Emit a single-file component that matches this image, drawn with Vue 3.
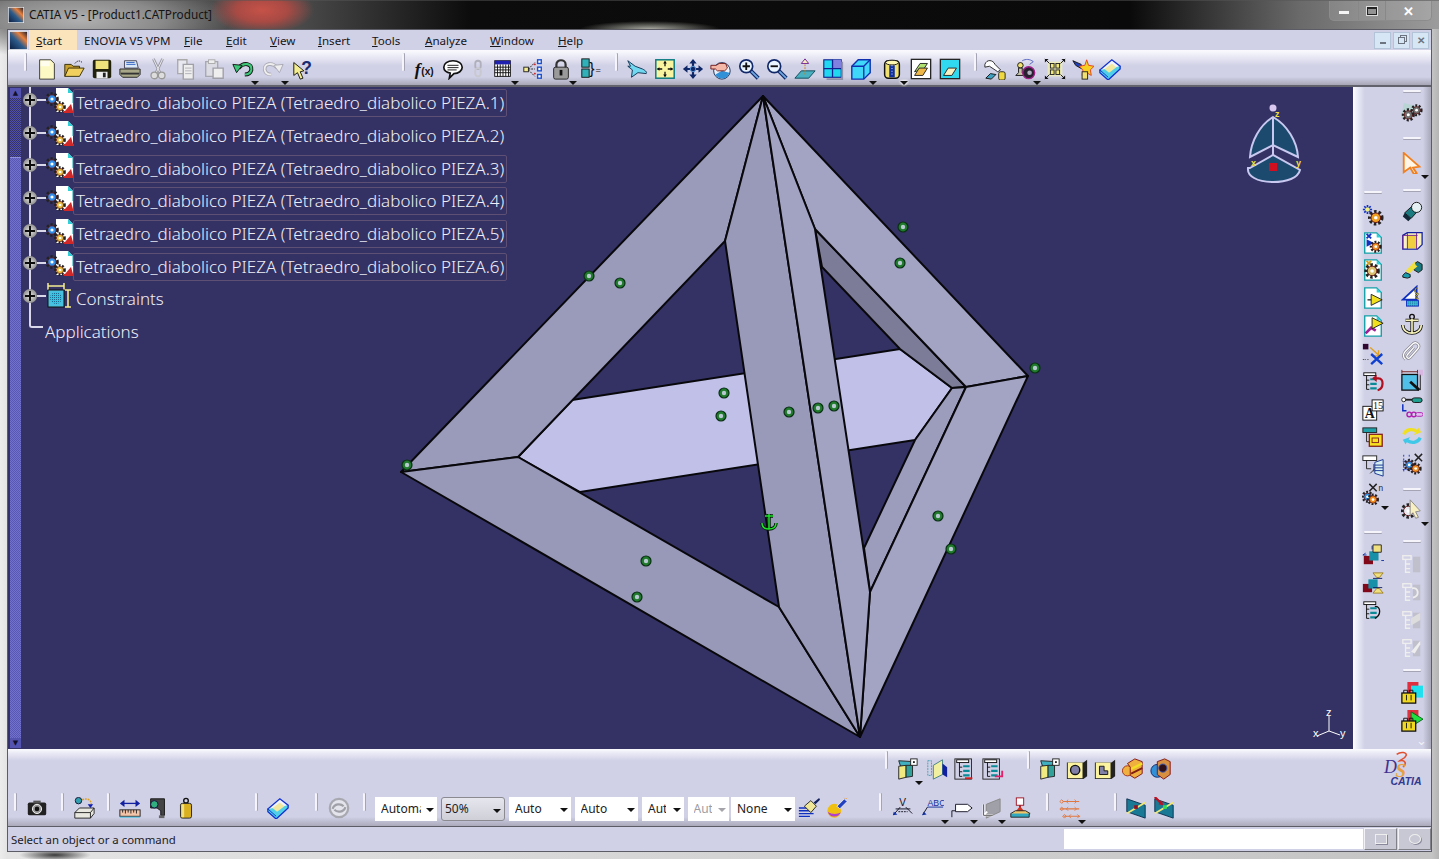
<script setup>
// each bar lists items by centre position; place() turns that into flow margins
function place(items, start, size = 24) {
  let pos = start
  return items.map((it) => {
    const len = it.grip ? 2 : it.w || size
    const gap = it.at - len / 2 - pos
    pos = it.at + len / 2
    return { ...it, len, gap }
  })
}
const ic = (id, at, drop) => ({ id, at, drop })
const grip = (at) => ({ grip: true, at })
const box = (text, at, w, extra) => ({ combo: true, text, at, w, ...extra })

const menus = [
  { u: 'S', rest: 'tart', w: 48, on: true },
  { u: '', rest: 'ENOVIA V5 VPM', w: 100 },
  { u: 'F', rest: 'ile', w: 42 },
  { u: 'E', rest: 'dit', w: 44 },
  { u: 'V', rest: 'iew', w: 48 },
  { u: 'I', rest: 'nsert', w: 54 },
  { u: 'T', rest: 'ools', w: 53 },
  { u: 'A', rest: 'nalyze', w: 65 },
  { u: 'W', rest: 'indow', w: 68 },
  { u: 'H', rest: 'elp', w: 50 },
]

const topBar = place([
  grip(25), ic('new', 47), ic('open', 74), ic('save', 102), ic('print', 130), ic('cut', 158), ic('copy', 186),
  ic('paste', 214), ic('undo', 243, 1), ic('redo', 273, 1), ic('help', 303),
  grip(403), ic('fx', 425), ic('chat', 453), ic('link', 478), ic('table', 503, 1), ic('tree', 533), ic('lock', 561, 1), ic('brace', 591),
  grip(616), ic('fly', 637), ic('fit', 665), ic('pan', 693), ic('rotate', 721), ic('zoomin', 749), ic('zoomout', 777),
  ic('normal', 805), ic('multi', 833), ic('cube', 861, 1), ic('cyl', 892, 1), ic('hide', 921), ic('show', 950),
  grip(975), ic('mouse', 995), ic('chess', 1025, 1), ic('explode', 1055), ic('star', 1083), ic('book', 1110),
], 8)

const rowOne = place([
  grip(886), ic('asm', 907, 1), ic('panel', 937), ic('list', 965), ic('listred', 993),
  grip(1028), ic('asm', 1049), ic('ysq', 1077), ic('ysql', 1105), ic('ocube', 1133), ic('ocube2', 1161),
], 8)

const rowTwo = place([
  grip(15), ic('camera', 37), grip(62), ic('ballbox', 84), grip(108), ic('ruler', 130), ic('clamp', 158), ic('weight', 186),
  grip(256), ic('book', 278), grip(316), ic('swirl', 339), grip(364),
  box('Automatic', 406, 62), box('50%', 473, 64, { gray: true }), box('Auto', 540, 62), box('Auto', 606, 63),
  box('Auto', 663, 42, { narrow: true }), box('Auto', 708, 41, { narrow: true, off: true }), box('None', 763, 64),
  ic('brush', 809), ic('paint', 837),
  grip(880), ic('vtext', 903), ic('abc', 933, 1), ic('pill', 962, 1), ic('gplane', 990, 1), ic('stand', 1020),
  grip(1047), ic('oarrows', 1070, 1), grip(1115), ic('sect', 1136), ic('sect2', 1164),
], 8)

const sideOne = place([
  grip(192), ic('gearstar', 215), ic('docgear', 243), ic('docgear2', 270), ic('docarrow', 298), ic('docarrow2', 326),
  ic('xobj', 354), ic('linesred', 382), ic('a15', 410), ic('treey', 438), ic('treeb', 466), ic('gearx', 494, 1),
  grip(532), ic('cnstr', 555), ic('cnstr2', 583), ic('linesb', 611),
], 87)

const sideTwo = place([
  grip(91), ic('gears', 113), grip(138), ic('cursor', 163, 1), grip(190), ic('tcyl', 212), ic('pcube', 240), ic('blocks', 268),
  ic('tri', 296), ic('anchor', 324), ic('clip', 352), ic('dimsq', 380), ic('screw', 408), ic('loop', 436), ic('xgrid', 464),
  grip(489), ic('gearcur', 510, 1), grip(541), ic('dis1', 564), ic('dis2', 592), ic('dis3', 620), ic('dis4', 648),
  grip(670), ic('fold1', 693), ic('fold2', 721),
], 87)

const parts = [1, 2, 3, 4, 5, 6].map((n) => ({
  label: `Tetraedro_diabolico PIEZA (Tetraedro_diabolico PIEZA.${n})`,
  framed: n !== 2,
}))

const points = [
  [589, 276], [620, 283], [903, 227], [900, 263], [1035, 368], [407, 465], [724, 393], [721, 416],
  [789, 412], [818, 408], [834, 406], [938, 516], [951, 549], [646, 561], [637, 597],
]

const faces = [
  { fill: '#c0c0e9', pts: '518,457 572,400 900,349 952,388 915,440 580,492' },
  { fill: '#7c7c98', pts: '815,229 966,387 952,388 900,349 822,267' },
  { fill: '#9c9cbc', pts: '952,388 966,387 870,592 864,548 915,440' },
  { fill: '#9a9abb', pts: '763,96 401,472 518,457 725,241' },
  { fill: '#9898b8', pts: '401,472 860,737 779,607 518,457' },
  { fill: '#a3a3c4', pts: '763,96 1028,376 966,387 815,229' },
  { fill: '#a3a3c4', pts: '1028,376 860,737 870,592 966,387' },
  { fill: '#9999ba', pts: '763,96 725,241 779,607 860,737' },
  { fill: '#a2a2c3', pts: '763,96 815,229 870,592 860,737' },
]
</script>

<template>
  <div class="window">
    <svg class="defs" width="0" height="0">
      <defs>
        <linearGradient id="catg" x1="0" y1="1" x2="1" y2="0">
          <stop offset="0" stop-color="#0b1a3c" />
          <stop offset=".45" stop-color="#2c5c8c" />
          <stop offset=".7" stop-color="#e8803c" />
          <stop offset="1" stop-color="#10182c" />
        </linearGradient>
        <pattern id="dots" width="2" height="2" patternUnits="userSpaceOnUse">
          <rect width="2" height="2" fill="#38c0e0" />
          <rect width="1" height="1" fill="#1a6a90" />
        </pattern>
      </defs>
    </svg>
    <svg class="sprite">
      <defs>
        <g id="p-gear">
          <circle r="5" fill="none" stroke="#222" stroke-width="3" stroke-dasharray="2 1.6" />
          <circle r="4" stroke="#601010" stroke-width=".8" />
          <circle r="1.5" fill="#fff" />
        </g>
        <g id="p-doc">
          <path d="M3 1h13l5 5v17H3z" fill="#fff" stroke="#14a0a8" stroke-width="1.5" />
          <path d="M16 1v5h5z" fill="#30d0d8" />
        </g>
        <g id="p-list">
          <rect x="3" y="2" width="13" height="3" fill="#fff" stroke="#111" />
          <path d="M6 5v15h3M6 10h3M6 15h3" fill="none" stroke="#111" />
          <path d="M10 9h7M10 14h7M10 19h7" stroke="#0a8a96" stroke-width="2.4" />
        </g>
        <g id="p-dis"><rect x="2" y="3" width="9" height="4" fill="none" stroke="#eee" stroke-width="1.500" /><path d="M5 7v14h5M5 12h5M5 17h5" fill="none" stroke="#eee" stroke-width="1.500" /><path d="M13 4h8v17h-8z" fill="#c0c0cc" /></g>
      </defs>

      <symbol id="cat" viewBox="0 0 24 24"><rect x=".5" y=".5" width="23" height="23" fill="url(#catg)" stroke="#eee" /></symbol>
      <symbol id="new" viewBox="0 0 24 24"><path d="M4 2h12l4 4v17H4z" fill="#fdf9c4" stroke="#333" /><path d="M5 3h10v6H5z" fill="#fff" opacity=".7" /></symbol>
      <symbol id="open" viewBox="0 0 24 24"><path d="M2 20V7h7l2 2h7v3" fill="#c8a030" stroke="#332a00" /><path d="M2 20l4-9h17l-5 9z" fill="#f2d060" stroke="#332a00" /><path d="M13 6c3-4 6-3 8-1" fill="none" stroke="#222" stroke-dasharray="1.5 1" /></symbol>
      <symbol id="save" viewBox="0 0 24 24"><rect x="2" y="2" width="20" height="20" rx="2" fill="#22220c" /><rect x="5" y="3" width="14" height="9" fill="#eee27c" /><rect x="6" y="15" width="12" height="7" fill="#eee" /><rect x="13" y="16" width="3" height="5" fill="#222" /></symbol>
      <symbol id="print" viewBox="0 0 24 24"><path d="M6 3h13l2 8H6z" fill="#d8e8f8" stroke="#445" /><path d="M8 5h9M8 7h10" stroke="#3060c0" /><path d="M1 12h22v6l-3 3H4l-3-3z" fill="#a8a888" stroke="#222" /><path d="M2 17h20" stroke="#333" stroke-width="2" /></symbol>
      <symbol id="cut" viewBox="0 0 24 24"><path d="M7 1l7 15M17 1l-7 15" stroke="#9a9aa8" stroke-width="3" /><path d="M7 1l7 15M17 1l-7 15" stroke="#eee" /><circle cx="8" cy="19" r="3.600" fill="#ddd" stroke="#999" stroke-width="1.400" /><circle cx="16" cy="19" r="3.600" fill="#ddd" stroke="#999" stroke-width="1.400" /></symbol>
      <symbol id="copy" viewBox="0 0 24 24"><path d="M3 2h10v15H3z" fill="#e8e8f0" stroke="#aaa" stroke-width="1.500" /><path d="M9 7h11v16H9z" fill="#eee" stroke="#a0a0a8" stroke-width="1.500" /><path d="M11 11h7M11 14h7M11 17h7" stroke="#b0b0b8" /></symbol>
      <symbol id="paste" viewBox="0 0 24 24"><path d="M3 4h13v16H3z" fill="#dcdce4" stroke="#a8a8b0" stroke-width="1.500" /><rect x="6" y="2" width="7" height="4" fill="#eee" stroke="#aaa" /><path d="M11 11h11v11H11z" fill="#eee" stroke="#a0a0a8" stroke-width="1.500" /></symbol>
      <symbol id="undo" viewBox="0 0 24 24"><path d="M7 11c6-7 15-5 14 2-1 4-4 5-7 5" fill="none" stroke="#111" stroke-width="4.400" /><path d="M7 11c6-7 15-5 14 2-1 4-4 5-7 5" fill="none" stroke="#3cc878" stroke-width="2.400" /><path d="M1 7l10 1-6 8z" fill="#3cc878" stroke="#111" /></symbol>
      <symbol id="redo" viewBox="0 0 24 24"><path d="M17 11c-6-7-15-5-14 2 1 4 4 5 7 5" fill="none" stroke="#a8a8b4" stroke-width="4" /><path d="M17 11c-6-7-15-5-14 2 1 4 4 5 7 5" fill="none" stroke="#eee" stroke-width="2" /><path d="M23 7l-10 1 6 8z" fill="#eee" stroke="#a8a8b4" /></symbol>
      <symbol id="help" viewBox="0 0 24 24"><path d="M2 5l11 9-4 1 3 7-3 1-3-7-4 3z" fill="#f4ec90" stroke="#111" /><text x="10" y="17" font-family="Liberation Sans" font-weight="700" font-size="19" fill="#1a2a70">?</text></symbol>
      <symbol id="fx" viewBox="0 0 24 24"><text x="1" y="18" font-family="Liberation Serif" font-style="italic" font-weight="700" font-size="19" fill="#111">f</text><text x="8" y="18" font-family="Liberation Sans" font-weight="700" font-size="11" fill="#111">(x)</text></symbol>
      <symbol id="chat" viewBox="0 0 24 24"><path d="M12 3c6 0 10 3 10 7s-4 7-9 7l-5 5 1-5.500C5 15.500 2 13 2 10c0-4 4-7 10-7z" fill="#fff" stroke="#111" stroke-width="1.800" /><path d="M6 8h12M6 10.500h12M6 13h10" stroke="#111" /></symbol>
      <symbol id="link" viewBox="0 0 24 24"><rect x="9" y="3" width="6" height="9" rx="3" fill="none" stroke="#b0b0bc" stroke-width="2" /><rect x="9" y="11" width="6" height="9" rx="3" fill="none" stroke="#c8c8d0" stroke-width="2" /></symbol>
      <symbol id="table" viewBox="0 0 24 24"><rect x="3" y="3" width="17" height="17" fill="#fff" stroke="#111" /><rect x="3" y="3" width="17" height="4" fill="#2020b0" /><path d="M6 7v13M9 7v13M12 7v13M15 7v13M18 7v13M3 10h17M3 13h17M3 16h17" stroke="#111" /></symbol>
      <symbol id="tree" viewBox="0 0 24 24"><rect x="2" y="10" width="5" height="5" fill="#f4ec90" stroke="#222" /><path d="M7 12l7-7M7 12h7M7 13l7 7" stroke="#222" stroke-dasharray="2 1" /><g fill="#fff" stroke="#1a50d0" stroke-width="1.500"><rect x="17" y="2" width="4" height="4" /><rect x="17" y="10" width="4" height="4" /><rect x="17" y="18" width="4" height="4" /></g><path d="M13 7h2M14 6v2M13 17h2M14 16v2" stroke="#d02020" /></symbol>
      <symbol id="lock" viewBox="0 0 24 24"><path d="M7 11V7c0-6 10-6 10 0v4" fill="none" stroke="#333" stroke-width="2.400" /><rect x="4" y="10" width="16" height="13" rx="2" fill="#9a9a9a" stroke="#222" /><rect x="10.500" y="13" width="3" height="6" fill="#111" /></symbol>
      <symbol id="brace" viewBox="0 0 24 24"><rect x="2" y="1" width="8" height="9" fill="#30b0b8" stroke="#111" /><rect x="2" y="12" width="8" height="9" fill="#30b0b8" stroke="#111" /><text x="10" y="17" font-family="Liberation Sans" font-size="17" fill="#111">}</text><text x="17" y="16" font-family="Liberation Sans" font-size="10" fill="#111">=</text></symbol>
      <symbol id="fly" viewBox="0 0 24 24"><path d="M2 3l8 6 8 3c4 2 5 4 4 5l-9-1-7 5 1-8-5-4 3 0z" fill="#70d8f0" stroke="#103050" /></symbol>
      <symbol id="fit" viewBox="0 0 24 24"><rect x="2" y="2" width="20" height="20" fill="#f8f4a0" stroke="#0a7a80" stroke-width="1.600" /><path d="M12 4v5M12 15v5M4 12h5M15 12h5" stroke="#111" stroke-width="1.400" /><path d="M12 3l-2 3h4zM12 21l-2-3h4zM3 12l3-2v4zM21 12l-3-2v4z" fill="#111" /></symbol>
      <symbol id="pan" viewBox="0 0 24 24"><path d="M12 4v16M4 12h16" stroke="#102868" stroke-width="2.400" /><path d="M12 1l-4 5h8zM12 23l-4-5h8zM1 12l5-4v8zM23 12l-5-4v8z" fill="#102868" /><circle cx="12" cy="12" r="3" fill="#102868" stroke="#60a0e0" /></symbol>
      <symbol id="rotate" viewBox="0 0 24 24"><circle cx="13" cy="14" r="9" fill="#e8f0fa" stroke="#1a2a50" /><path d="M6 18a8 8 0 0 0 15-2l-8-2z" fill="#3090d8" /><path d="M1 8h6l3-2h7l2 5-3 3H8l-2-2H1z" fill="#f4b8a8" stroke="#701818" /></symbol>
      <symbol id="zoomin" viewBox="0 0 24 24"><path d="M14 14l8 8" stroke="#102868" stroke-width="4.400" /><path d="M14 14l8 8" stroke="#70a8e0" stroke-width="2" /><circle cx="9" cy="9" r="7" fill="#e8f4ff" stroke="#102868" stroke-width="1.800" /><path d="M5 9h8M9 5v8" stroke="#111" stroke-width="2" /></symbol>
      <symbol id="zoomout" viewBox="0 0 24 24"><path d="M14 14l8 8" stroke="#102868" stroke-width="4.400" /><path d="M14 14l8 8" stroke="#70a8e0" stroke-width="2" /><circle cx="9" cy="9" r="7" fill="#e8f4ff" stroke="#102868" stroke-width="1.800" /><path d="M5 9h8" stroke="#111" stroke-width="2" /></symbol>
      <symbol id="normal" viewBox="0 0 24 24"><path d="M1 22l7-8h15l-7 8z" fill="#48b0c0" stroke="#104858" /><path d="M12 18V5" stroke="#d08020" stroke-dasharray="2 1" /><path d="M12 1l-4 5h8z" fill="#f8f0c0" stroke="#702090" /></symbol>
      <symbol id="multi" viewBox="0 0 24 24"><rect x="2" y="2" width="19" height="19" fill="#20d8f0" stroke="#102090" stroke-width="1.200" /><rect x="12" y="2" width="9" height="9" fill="#8080e0" /><path d="M11.500 2v19M2 11.500h19" stroke="#102090" stroke-width="1.400" /><path d="M22 4v19H5" fill="none" stroke="#9090a8" stroke-width="2" /></symbol>
      <symbol id="cube" viewBox="0 0 24 24"><path d="M2 9l7-7h13v14l-7 7H2z" fill="#40d8f8" stroke="#1030b0" stroke-width="1.500" /><path d="M2 9h13v14M15 9l7-7" fill="none" stroke="#1030b0" stroke-width="1.500" /></symbol>
      <symbol id="cyl" viewBox="0 0 24 24"><rect x="4" y="3" width="16" height="19" rx="4" fill="#f0e070" stroke="#111" stroke-width="1.600" /><ellipse cx="12" cy="5" rx="7" ry="2.600" fill="#fff8b0" stroke="#111" /><rect x="9" y="8" width="6" height="13" fill="#1030a0" /><path d="M12 8v12" stroke="#fff" stroke-dasharray="1 2" /></symbol>
      <symbol id="hide" viewBox="0 0 24 24"><rect x="1.500" y="1.500" width="21" height="21" fill="#fff" stroke="#222" stroke-width="1.400" /><path d="M5 15l6-9h8l-4 6z" fill="#b0e070" stroke="#222" /><path d="M5 19l5-8h9l-5 8z" fill="#f0b848" stroke="#222" /></symbol>
      <symbol id="show" viewBox="0 0 24 24"><rect x="1.500" y="1.500" width="21" height="21" fill="#30d8f0" stroke="#222" stroke-width="1.400" /><path d="M5 19l5-8h9l-5 8z" fill="#f8f0c0" stroke="#222" /></symbol>
      <symbol id="mouse" viewBox="0 0 24 24"><path d="M1 7c2-6 9-5 11 0l6 6-3 2-9-6-5 1z" fill="#fff" stroke="#222" /><path d="M2 22l5-5 6 1-5 5z" fill="#40a0c0" stroke="#111" /><rect x="16" y="15" width="7" height="9" rx="2" fill="#f0d840" stroke="#222" /></symbol>
      <symbol id="chess" viewBox="0 0 24 24"><circle cx="7" cy="8" r="3" fill="#f0e070" stroke="#111" /><path d="M5 11h4v5l3 3H2l3-3z" fill="#c8c8a8" stroke="#111" /><path d="M9 3c4-2 8-2 12 1l-4 3" fill="none" stroke="#5060c0" /><circle cx="16" cy="16" r="6.500" fill="#282030" stroke="#a02088" stroke-width="1.500" /><circle cx="17" cy="16" r="2.500" fill="#b0b0c0" /></symbol>
      <symbol id="explode" viewBox="0 0 24 24"><rect x="4" y="4" width="16" height="16" fill="#f8f8a0" opacity=".6" /><g fill="#f0e878" stroke="#222"><rect x="7" y="6" width="4" height="5" /><rect x="13" y="6" width="4" height="5" /><rect x="7" y="13" width="4" height="5" /><rect x="13" y="13" width="4" height="5" /></g><path d="M1 1l5 5M23 1l-5 5M1 23l5-5M23 23l-5-5" stroke="#111" /><path d="M1 1h4L1 5zM23 1h-4l4 4zM1 23h4l-4-4zM23 23h-4l4-4z" fill="#111" /></symbol>
      <symbol id="star" viewBox="0 0 24 24"><path d="M1 3l9 4 1 5-7-4z" fill="#2040c0" stroke="#111" /><path d="M16 2l2 6 6 1-4 4 1 6-5-3-5 3 1-6-4-4 6-1z" fill="#f8d020" stroke="#e04020" /><rect x="11" y="15" width="6" height="8" fill="#f0e070" stroke="#222" /></symbol>
      <symbol id="book" viewBox="0 0 24 24"><path d="M1 13L14 2l9 7-13 12z" fill="#f0f4ff" stroke="#1030d0" stroke-width="1.400" /><path d="M1 13v3l9 8 13-12V9" fill="#50d0e8" stroke="#1030d0" stroke-width="1.400" /><path d="M1 13l9 8" stroke="#1030d0" /><path d="M6 12l8-6 5 4-8 6z" fill="#f0e8a0" /></symbol>
      <symbol id="camera" viewBox="0 0 24 24"><rect x="2" y="6" width="20" height="14" rx="2" fill="#222" /><rect x="8" y="4" width="8" height="3" fill="#555" /><circle cx="12" cy="13" r="5" fill="#999" stroke="#fff" /><circle cx="12" cy="13" r="2.500" fill="#111" /></symbol>
      <symbol id="ballbox" viewBox="0 0 24 24"><circle cx="6" cy="4" r="3.500" fill="#30a0b0" stroke="#113" /><path d="M10 3c6-2 10 0 10 6" fill="none" stroke="#e0a020" stroke-width="1.500" stroke-dasharray="2 1" /><path d="M16 8l6 0-3 4z" fill="#1020b0" /><path d="M2 17l5-5h16v6l-4 5H2z" fill="#e8e8e0" stroke="#222" /><path d="M2 17h17v6M19 17l4-5" fill="none" stroke="#222" /></symbol>
      <symbol id="ruler" viewBox="0 0 24 24"><path d="M3 7h18" stroke="#1020a0" stroke-width="1.400" /><path d="M1 7l5-4v8zM23 7l-5-4v8z" fill="#1020a0" /><rect x="1" y="14" width="22" height="7" fill="#f4c4a8" stroke="#222" /><path d="M4 14v3M7 14v4M10 14v3M13 14v4M16 14v3M19 14v4" stroke="#222" /><path d="M1 22h22" stroke="#40c0e0" /></symbol>
      <symbol id="clamp" viewBox="0 0 24 24"><path d="M4 2h15v18h-4v-5l-4-3H4z" fill="#444" stroke="#111" /><circle cx="8" cy="8" r="4" fill="#30b080" stroke="#114" /><rect x="13" y="20" width="6" height="3" fill="#666" /></symbol>
      <symbol id="weight" viewBox="0 0 24 24"><circle cx="12" cy="4" r="2.500" fill="none" stroke="#111" stroke-width="1.500" /><rect x="6" y="7" width="12" height="16" rx="2" fill="#d8b020" stroke="#222" /><rect x="7" y="8" width="3" height="14" fill="#f0e080" /></symbol>
      <symbol id="swirl" viewBox="0 0 24 24"><circle cx="12" cy="12" r="10" fill="#e4e4ec" stroke="#a8a8b0" stroke-width="2.400" /><path d="M5 13c2-6 9-6 12-3M19 11c-2 6-9 6-12 3" fill="none" stroke="#a0a0a8" stroke-width="2.400" /></symbol>
      <symbol id="brush" viewBox="0 0 24 24"><path d="M1 12h12M1 15h14M1 18h16M1 21h12" stroke="#1030c0" stroke-width="1.400" /><path d="M7 10l7-6 6 6-6 7z" fill="#f0e898" stroke="#222" /><path d="M17 6l6-5 1 2-5 5z" fill="#102060" /></symbol>
      <symbol id="paint" viewBox="0 0 24 24"><circle cx="9" cy="15" r="7.500" fill="#f0c010" /><path d="M2 16a7.500 7.500 0 0 0 14 1c-4 2-10 2-14-1z" fill="#b040d0" /><path d="M12 10l8-8 3 3-8 8z" fill="#2040c0" stroke="#eee" /><path d="M20 1l1 1M23 1l-1 1" stroke="#e8a040" /></symbol>
      <symbol id="vtext" viewBox="0 0 24 24"><text x="8" y="10" font-family="Liberation Sans" font-size="11" fill="#112">V</text><path d="M4 13h16" stroke="#112" /><path d="M7 16h10" stroke="#112" stroke-dasharray="2 1" /><path d="M9 11L2 19M15 11l7 7" stroke="#112" /><path d="M1 20l5-1-4-3z" fill="#1030a0" /></symbol>
      <symbol id="abc" viewBox="0 0 24 24"><text x="6" y="10" font-family="Liberation Sans" font-size="9.500" fill="#1030a0">ABC</text><path d="M6 11h17" stroke="#1030a0" /><path d="M6 11l-5 8" stroke="#112" /><path d="M0 20l5-1-3-3z" fill="#1030a0" /></symbol>
      <symbol id="pill" viewBox="0 0 24 24"><path d="M1 22v-7h4" fill="none" stroke="#112" /><path d="M5 8h13l5 4-5 4H5z" fill="#fff" stroke="#112" /></symbol>
      <symbol id="gplane" viewBox="0 0 24 24"><path d="M8 8l15-6v14L8 23z" fill="#a0a0a8" stroke="#888" /><path d="M5 8v12h10M5 20l4-4" fill="none" stroke="#fff" stroke-width="2" /><path d="M5 8v12h10" fill="none" stroke="#555" /></symbol>
      <symbol id="stand" viewBox="0 0 24 24"><rect x="8" y="1" width="8" height="8" fill="#fff" stroke="#a01020" /><path d="M12 9v5" stroke="#a01020" stroke-width="2" /><path d="M12 10l-5 6h10z" fill="#d03020" /><path d="M2 18l5-3h11l5 3-5 3H6z" fill="#f0c468" stroke="#222" /><path d="M2 18v4h20v-4" fill="#30a8c0" stroke="#222" /></symbol>
      <symbol id="oarrows" viewBox="0 0 24 24"><g stroke="#e07840" fill="none"><path d="M4 5h18M2 13h20M5 21h18" stroke-width="1.200" /><path d="M3 3l2 2-2 2-2-2zM3 11l2 2-2 2-2-2zM6 19l2 2-2 2-2-2z" /><path d="M10 3l-2 2 2 2M17 3l2 2-2 2M10 11l-2 2 2 2M17 11l2 2-2 2M13 19l-2 2 2 2M20 19l2 2-2 2" /></g></symbol>
      <symbol id="sect" viewBox="0 0 24 24"><path d="M2 2l20 7v14L2 16z" fill="#1a7a96" stroke="#0a3050" /><path d="M2 18L22 6" stroke="#f0e878" stroke-width="2" /><rect x="10" y="9" width="4" height="4" fill="#901020" /></symbol>
      <symbol id="sect2" viewBox="0 0 24 24"><path d="M2 2l20 7v14L2 16z" fill="#1a7a96" stroke="#0a3050" /><path d="M2 18L22 6" stroke="#f0e878" stroke-width="2" /><rect x="11" y="9" width="4" height="4" fill="#30e050" /><path d="M2 0l7 7" stroke="#c01020" stroke-width="2.400" /><path d="M11 9l-1-5-4 4z" fill="#c01020" /></symbol>
      <symbol id="asm" viewBox="0 0 24 24"><path d="M3 3l16 1-5 5-9 0z" fill="#40b0c0" stroke="#222" /><path d="M3 9l8-1v13l-8 2z" fill="#f0e880" stroke="#222" /><path d="M11 8h7v12l-7 1z" fill="#30a098" stroke="#222" /><rect x="16" y="1" width="7" height="7" fill="#fff" stroke="#222" /><rect x="18.500" y="3.500" width="2" height="2" fill="#222" /></symbol>
      <symbol id="panel" viewBox="0 0 24 24"><path d="M2 3h4v16H2z" fill="none" stroke="#40a0b0" stroke-dasharray="2 1" /><path d="M8 8l10-6v16L8 23z" fill="#f0f0a0" stroke="#408080" /><path d="M18 6l5 4v11l-5-3z" fill="#1020a0" /></symbol>
      <symbol id="list" viewBox="0 0 24 24"><use href="#p-list" /><rect x="1" y="1" width="18" height="22" fill="none" stroke="#222" /><path d="M12 22h8" stroke="#d02020" stroke-width="2" /></symbol>
      <symbol id="listred" viewBox="0 0 24 24"><use href="#p-list" /><rect x="1" y="1" width="18" height="22" fill="none" stroke="#222" /><path d="M14 20h8v-6" fill="none" stroke="#e02068" stroke-width="2" /></symbol>
      <symbol id="ysq" viewBox="0 0 24 24"><path d="M1 5h18l4-3v18l-4 3H1z" fill="#222" /><rect x="2" y="5" width="16" height="17" fill="#fbf3a0" /><circle cx="10" cy="13" r="5" fill="#8080a8" stroke="#111" stroke-width="1.500" /></symbol>
      <symbol id="ysql" viewBox="0 0 24 24"><path d="M1 5h18l4-3v18l-4 3H1z" fill="#222" /><rect x="2" y="5" width="16" height="17" fill="#fbf3a0" /><path d="M6 9h5v5h4v4H6z" fill="#8080a8" stroke="#111" /></symbol>
      <symbol id="ocube" viewBox="0 0 24 24"><circle cx="6" cy="14" r="5.500" fill="#f0b040" stroke="#a03010" /><path d="M6 6l8-5 8 3v13l-8 5-5-3V10z" fill="#f0b040" stroke="#801010" /><path d="M10 12l12-6" stroke="#f0e020" stroke-width="2.400" /><path d="M10 17l12-6" stroke="#802010" stroke-width="2" /></symbol>
      <symbol id="ocube2" viewBox="0 0 24 24"><circle cx="8" cy="14" r="7" fill="#3090d8" stroke="#102868" /><path d="M8 4l8-3 6 3v14l-7 5-7-5z" fill="#d89040" stroke="#801010" /><circle cx="14" cy="11" r="4.500" fill="#301018" stroke="#4060c0" /></symbol>
      <symbol id="gears" viewBox="0 0 24 24"><path d="M0 18L22 6 3 1z" fill="#a8d8c8" opacity=".6" /><use href="#p-gear" fill="#707070" transform="translate(8 14) scale(1.100)" /><use href="#p-gear" fill="#707070" transform="translate(17 9)" /></symbol>
      <symbol id="cursor" viewBox="0 0 24 24"><path d="M3 1l17 15-7 1 4 6-3 1-4-7-7 5z" fill="#fff6e8" stroke="#f08020" stroke-width="2" /></symbol>
      <symbol id="gearstar" viewBox="0 0 24 24"><path d="M6 1v10M1 6h10M2.500 2.500l7 7M9.500 2.500l-7 7" stroke="#1030c0" stroke-width="1.800" /><circle cx="6" cy="6" r="2.500" fill="#f0f080" /><use href="#p-gear" fill="#f0a020" transform="translate(15 15) scale(1.300)" /></symbol>
      <symbol id="docgear" viewBox="0 0 24 24"><use href="#p-doc" /><path d="M5 2l5 5M10 2l-5 5" stroke="#1030c0" stroke-width="2" /><path d="M5 8l8 4-8 4z" fill="#1030c0" /><use href="#p-gear" fill="#f09020" transform="translate(15 16)" /></symbol>
      <symbol id="docgear2" viewBox="0 0 24 24"><use href="#p-doc" /><path d="M5 2l5 5M10 2l-5 5" stroke="#d0a020" stroke-width="2" /><use href="#p-gear" fill="#d8c070" transform="translate(11 13) scale(1.300)" /></symbol>
      <symbol id="docarrow" viewBox="0 0 24 24"><use href="#p-doc" /><path d="M6 14h6" stroke="#222" stroke-width="1.400" /><path d="M10 8l12 6-12 6z" fill="#f0e020" stroke="#222" /></symbol>
      <symbol id="docarrow2" viewBox="0 0 24 24"><use href="#p-doc" /><path d="M4 20l6-6 5 3" fill="none" stroke="#a02098" stroke-width="3" /><path d="M11 3l12 6-12 6z" fill="#f0e020" stroke="#222" /></symbol>
      <symbol id="xobj" viewBox="0 0 24 24"><rect x="1" y="1" width="6" height="6" fill="#300830" /><path d="M9 5l9 8" stroke="#e0a020" stroke-width="1.500" /><path d="M18 8v6h-6" fill="none" stroke="#e0a020" stroke-width="1.500" /><path d="M10 12l12 11M22 12L10 23" stroke="#1040d0" stroke-width="2.600" /><path d="M1 18h4M6 18h2" stroke="#222" stroke-dasharray="1 1" /></symbol>
      <symbol id="linesred" viewBox="0 0 24 24"><use href="#p-list" transform="translate(-1 0)" /><path d="M13 8l5 0c6 0 6 11-1 13" fill="none" stroke="#b01020" stroke-width="2.400" /><path d="M11 8l5-4v8z" fill="#b01020" /></symbol>
      <symbol id="linesb" viewBox="0 0 24 24"><use href="#p-list" transform="translate(-1 0)" /><path d="M14 7c7 0 7 10 0 13" fill="none" stroke="#111" stroke-width="1.400" /></symbol>
      <symbol id="a15" viewBox="0 0 24 24"><rect x="1" y="8" width="15" height="15" fill="#fff" stroke="#111" /><text x="3" y="21" font-family="Liberation Serif" font-weight="700" font-size="15" fill="#111">A</text><rect x="11" y="1" width="12" height="12" fill="#fff" stroke="#111" /><text x="12" y="11" font-family="Liberation Serif" font-size="11" fill="#111">15</text></symbol>
      <symbol id="treey" viewBox="0 0 24 24"><rect x="1" y="1" width="15" height="5" fill="#20a0a8" stroke="#222" /><path d="M5 6v10h4" fill="none" stroke="#222" /><rect x="8" y="8" width="14" height="13" fill="#f8e020" stroke="#802020" stroke-width="1.400" /><rect x="11" y="12" width="7" height="5" fill="none" stroke="#802020" /></symbol>
      <symbol id="treeb" viewBox="0 0 24 24"><rect x="1" y="1" width="15" height="5" fill="#fff" stroke="#222" /><path d="M5 6v9h5M13 10v8M9 20l5-5" fill="none" stroke="#222" /><path d="M14 8l9-3v18l-9-3z" fill="#d8f0f0" stroke="#103090" /><path d="M14 11h9M14 14h9M14 17h9" stroke="#103090" /></symbol>
      <symbol id="gearx" viewBox="0 0 24 24"><path d="M8 1l8 8M16 1L8 9" stroke="#222" stroke-width="1.600" /><text x="18" y="9" font-family="Liberation Sans" font-size="9" fill="#222">n</text><use href="#p-gear" fill="#3090e0" transform="translate(6 15)" /><use href="#p-gear" fill="#f09020" transform="translate(12 18)" /></symbol>
      <symbol id="cnstr" viewBox="0 0 24 24"><path d="M1 12h4M1 12l3-2M11 2v4M21 18h3" stroke="#1030a0" /><rect x="2" y="13" width="10" height="9" fill="#800818" /><rect x="8" y="8" width="10" height="10" fill="#1890a8" /><path d="M12 1h9v8h-9z" fill="#f0e080" stroke="#222" /></symbol>
      <symbol id="cnstr2" viewBox="0 0 24 24"><rect x="1" y="13" width="10" height="9" fill="#800818" /><rect x="7" y="8" width="10" height="10" fill="#1890a8" /><path d="M12 1h11l-4 5h-3zM12 23h11l-4-5h-3z" fill="#f0e080" stroke="#a08020" /><path d="M12 7h10M12 17h10" stroke="#102060" /></symbol>
      <symbol id="tcyl" viewBox="0 0 24 24"><path d="M4 13l11-10 6 5-10 11z" fill="#1a7a80" stroke="#111" /><circle cx="17" cy="7" r="5.500" fill="#e4f0f4" stroke="#111" /><path d="M4 13l7 6-3 3-6-5z" fill="#102838" /></symbol>
      <symbol id="pcube" viewBox="0 0 24 24"><path d="M2 7l5-3h16v13l-5 5H2z" fill="#f8f0c0" stroke="#1020a0" stroke-width="1.400" /><rect x="7" y="7" width="10" height="14" fill="#f0d040" /><path d="M2 7v15M7 4v18M17 4v18M2 7h16" stroke="#702090" /></symbol>
      <symbol id="blocks" viewBox="0 0 24 24"><path d="M14 8l4-3 5 3v6l-4 3-5-3z" fill="#1a7a80" stroke="#111" /><path d="M2 20l3-3 5 2v3l-3 1-5-1z" fill="#1a9aa8" stroke="#111" /><path d="M5 15L15 5l1 4 2 1-9 8z" fill="#f0e040" /></symbol>
      <symbol id="tri" viewBox="0 0 24 24"><path d="M2 16L17 2v14z" fill="#fff" stroke="#1030c0" stroke-width="2" /><path d="M17 3c-3 3-2 6 2 7-4 1-4 5 0 5" fill="none" stroke="#111" stroke-width="1.600" /><path d="M17 3c-3 3-2 6 2 7-4 1-4 5 0 5" fill="none" stroke="#f0e060" /><rect x="6" y="17" width="13" height="6" fill="url(#dots)" stroke="#1030c0" /></symbol>
      <symbol id="anchor" viewBox="0 0 24 24"><circle cx="12" cy="4" r="2.500" fill="none" stroke="#111" stroke-width="1.500" /><path d="M5 8h14M12 6v16M2 13c0 6 5 9 10 9s10-3 10-9" fill="none" stroke="#111" stroke-width="3.600" /><path d="M5 8h14M12 6v16M2 13c0 6 5 9 10 9s10-3 10-9" fill="none" stroke="#f4f0b8" stroke-width="1.800" /></symbol>
      <symbol id="clip" viewBox="0 0 24 24"><path d="M5 20c-4-3-2-7 0-9l8-8c4-3 9 2 5 6l-8 9c-2 2-5 0-3-3l7-8" fill="none" stroke="#8a8a94" stroke-width="3" /><path d="M5 20c-4-3-2-7 0-9l8-8c4-3 9 2 5 6l-8 9c-2 2-5 0-3-3l7-8" fill="none" stroke="#fff" stroke-width="1.400" /></symbol>
      <symbol id="dimsq" viewBox="0 0 24 24"><rect x="1" y="6" width="17" height="17" fill="#50c0e8" stroke="#111" stroke-width="1.400" /><path d="M1 1v4M18 1v4M1 3h17" stroke="#702020" /><path d="M21 6v17" stroke="#111" /><path d="M19 1h5v6h-5z" fill="#e0a0e0" opacity=".5" /><path d="M10 14l10 9" stroke="#111" stroke-width="3" /></symbol>
      <symbol id="screw" viewBox="0 0 24 24"><circle cx="3" cy="3" r="2.200" fill="#fff" stroke="#222" /><path d="M5 3h7" stroke="#222" stroke-width="2" /><rect x="12" y="1" width="11" height="5" rx="2.500" fill="#20a090" stroke="#111" /><path d="M2 8v7h4" fill="none" stroke="#1030c0" stroke-width="1.600" /><circle cx="9" cy="19" r="2.500" fill="none" stroke="#b020b0" stroke-width="1.500" /><circle cx="14" cy="19" r="2.500" fill="none" stroke="#b020b0" stroke-width="1.500" /><rect x="16" y="17" width="8" height="4" rx="2" fill="#e0c0f0" stroke="#b020b0" /></symbol>
      <symbol id="loop" viewBox="0 0 24 24"><path d="M3 10c3-6 10-6 14-3" fill="none" stroke="#f0e020" stroke-width="3.600" /><path d="M21 14c-3 6-10 6-14 3" fill="none" stroke="#40c8e8" stroke-width="3.600" /><path d="M14 11l8-3-3-5z" fill="#f0e020" /><path d="M10 13l-8 3 3 5z" fill="#40c8e8" /></symbol>
      <symbol id="xgrid" viewBox="0 0 24 24"><path d="M3 2v20M9 2v20M2 9h10M2 18h10" stroke="#1030c0" stroke-dasharray="2 2" /><path d="M15 1l8 8M23 1l-8 8" stroke="#222" stroke-width="1.600" /><use href="#p-gear" fill="#3090e0" transform="translate(9 13)" /><use href="#p-gear" fill="#f09020" transform="translate(16 17)" /></symbol>
      <symbol id="gearcur" viewBox="0 0 24 24"><use href="#p-gear" fill="#e8e8f0" transform="translate(8 13) scale(1.300)" /><path d="M10 1l11 12-5 1 3 6-3 1-3-6-3 3z" fill="#f8f0c0" stroke="#888" /></symbol>
      <symbol id="dis1" viewBox="0 0 24 24"><use href="#p-dis" /></symbol>
      <symbol id="dis2" viewBox="0 0 24 24"><use href="#p-dis" /><path d="M12 8c7-2 9 8 1 10" fill="none" stroke="#eee" stroke-width="2" /></symbol>
      <symbol id="dis3" viewBox="0 0 24 24"><use href="#p-dis" /><path d="M11 10l10-6v8l-10 6z" fill="#ddd" /></symbol>
      <symbol id="dis4" viewBox="0 0 24 24"><use href="#p-dis" /><path d="M11 16l10-12v4l-6 10z" fill="#eee" /></symbol>
      <symbol id="fold1" viewBox="0 0 24 24"><path d="M7 0h12v12H7z" fill="#e03040" /><path d="M11 4h13v13H11z" fill="#20e0f0" /><rect x="1" y="12" width="15" height="11" fill="#f0d820" stroke="#111" stroke-width="1.400" /><path d="M3 12V9h4v3M9 12V9h4v3M6 14v6M11 14v6" fill="none" stroke="#111" /></symbol>
      <symbol id="fold2" viewBox="0 0 24 24"><path d="M7 0h12v12H7z" fill="#e03040" /><path d="M11 2l13 8-13 8z" fill="#20e040" stroke="#106020" /><rect x="1" y="12" width="15" height="11" fill="#f0d820" stroke="#111" stroke-width="1.400" /><path d="M3 12V9h4v3M9 12V9h4v3M6 14v6M11 14v6" fill="none" stroke="#111" /></symbol>
      <symbol id="part" viewBox="0 0 28 30">
        <path d="M10 3h12l5 5v19H10z" fill="#fff" /><path d="M22 3v5h5z" fill="#30d0d8" /><path d="M27 8v10" stroke="#14a0a8" />
        <use href="#p-gear" fill="#2f8ce8" transform="translate(6 14) scale(1.050)" />
        <use href="#p-gear" fill="#e8c040" transform="translate(14 22) scale(.9)" />
        <path d="M19 26l6-7 2 7z" fill="#d02828" /><path d="M18 27h10" stroke="#d02828" stroke-width="2" />
      </symbol>
      <symbol id="cons" viewBox="0 0 28 30">
        <path d="M2 2v7M18 2v7M2 5h16" stroke="#f4ec90" stroke-width="1.500" />
        <rect x="2" y="9" width="16" height="17" fill="#48c0e0" stroke="#111" />
        <circle cx="10" cy="17" r="6" fill="url(#dots)" />
        <path d="M19 9h6M22 9v17M19 26h6" stroke="#f4ec90" stroke-width="1.600" />
      </symbol>
    </svg>

    <div class="title-bar">
      <svg class="title-logo"><use href="#cat" /></svg>
      <span class="title-text">CATIA V5 - [Product1.CATProduct]</span>
      <div class="win-btns">
        <span class="win-btn min"><i></i></span>
        <span class="win-btn max"><i></i></span>
        <span class="win-btn close">✕</span>
      </div>
    </div>

    <div class="frame">
      <div class="menu-bar">
        <svg class="menu-logo"><use href="#cat" /></svg>
        <span
          v-for="m in menus"
          :key="m.rest"
          class="menu-item"
          :class="{ on: m.on }"
          :style="{ width: m.w + 'px' }"
        ><u>{{ m.u }}</u>{{ m.rest }}</span>
        <div class="mdi-btns">
          <span class="mdi"><b class="mdi-min"></b></span>
          <span class="mdi"><b class="mdi-res"></b></span>
          <span class="mdi mdi-x">✕</span>
        </div>
      </div>

      <div class="tool-bar">
        <template v-for="(it, i) in topBar" :key="i">
          <span v-if="it.grip" class="grip" :style="{ marginLeft: it.gap + 'px' }"></span>
          <span v-else class="tool" :style="{ marginLeft: it.gap + 'px' }">
            <svg><use :href="'#' + it.id" /></svg>
            <i v-if="it.drop" class="drop" :class="{ lit: it.id === 'cyl' }"></i>
          </span>
        </template>
      </div>

      <div class="main-row">
        <div class="viewport">
          <svg class="model" viewBox="8 87 1345 662">
            <polygon v-for="f in faces" :key="f.pts" :points="f.pts" :fill="f.fill" stroke="#08080c" stroke-width="2" stroke-linejoin="round" />
            <g v-for="p in points" :key="p.join()">
              <circle :cx="p[0]" :cy="p[1]" r="5" fill="#1f7a2c" stroke="#0a3014" stroke-width="1.200" />
              <circle :cx="p[0]" :cy="p[1]" r="2.200" fill="#b8c8d0" />
            </g>
            <g transform="translate(769 522)" fill="none" stroke="#061a08" stroke-width="3.400">
              <path d="M-4-6H4M0-8V7M-7 1c0 4 3 6 7 6s7-2 7-6" />
            </g>
            <g transform="translate(769 522)" fill="none" stroke="#1ee02c" stroke-width="1.500">
              <path d="M-4-6H4M0-8V7M-7 1c0 4 3 6 7 6s7-2 7-6" />
            </g>
            <!-- compass -->
            <g fill="none" stroke="#c8c8f0" stroke-width="2">
              <path d="M1273 117c14 8 24 24 25 40l-25-12-23 12c1-16 10-32 23-40z" fill="#1c4a6e" />
              <path d="M1250 168l23-13 27 15c-2 8-13 12-27 12-16 0-26-6-25-14z" fill="#1c4a6e" />
              <path d="M1273 117v38" />
            </g>
            <circle cx="1273" cy="108" r="3.500" fill="#d8c8f0" />
            <rect x="1269" y="163" width="8" height="8" fill="#d01020" />
            <text x="1275" y="117" class="cmp">z</text>
            <text x="1251" y="166" class="cmp">x</text>
            <text x="1296" y="166" class="cmp">y</text>
            <!-- axes -->
            <path d="M1329 716v15l-12 5M1329 731l11 4" fill="none" stroke="#fff" />
            <text x="1326" y="716" class="axis">z</text>
            <text x="1313" y="737" class="axis">x</text>
            <text x="1340" y="737" class="axis">y</text>
          </svg>

          <div class="scroll-bar">
            <span class="scroll-end">▲</span>
            <span class="scroll-thumb"></span>
            <span class="scroll-track"></span>
            <span class="scroll-end">▼</span>
          </div>

          <div class="tree">
            <span class="elbow"></span>
            <div v-for="p in parts" :key="p.label" class="tree-row">
              <span class="node"></span>
              <span class="stub"></span>
              <svg class="tree-icon"><use href="#part" /></svg>
              <span class="tree-label" :class="{ framed: p.framed }">{{ p.label }}</span>
            </div>
            <div class="tree-row">
              <span class="node"></span>
              <span class="stub"></span>
              <svg class="tree-icon"><use href="#cons" /></svg>
              <span class="tree-label">Constraints</span>
            </div>
            <div class="tree-row apps"><span class="tree-label">Applications</span></div>
          </div>
        </div>

        <div class="side-bar">
          <div v-for="(col, c) in [sideOne, sideTwo]" :key="c" class="side-col">
            <template v-for="(it, i) in col" :key="i">
              <span v-if="it.grip" class="grip flat" :style="{ marginTop: it.gap + 'px' }"></span>
              <span v-else class="tool" :style="{ marginTop: it.gap + 'px' }">
                <svg><use :href="'#' + it.id" /></svg>
                <i v-if="it.drop" class="drop"></i>
              </span>
            </template>
          </div>
          <span class="more">⌄</span>
        </div>
      </div>

      <div class="bottom-bars">
        <div class="row row-one">
          <template v-for="(it, i) in rowOne" :key="i">
            <span v-if="it.grip" class="grip" :style="{ marginLeft: it.gap + 'px' }"></span>
            <span v-else class="tool" :style="{ marginLeft: it.gap + 'px' }">
              <svg><use :href="'#' + it.id" /></svg>
              <i v-if="it.drop" class="drop"></i>
            </span>
          </template>
          <svg class="logo" viewBox="0 0 42 34">
            <path d="M14 3c4-3 10-2 9 1-1 3-5 4-6 5 5-1 7 3 3 6" fill="none" stroke="#e05030" stroke-width="1.500" />
            <text x="2" y="21" font-family="Liberation Serif" font-style="italic" font-size="17" fill="#403090">D</text>
            <text x="13" y="25" font-family="Liberation Serif" font-style="italic" font-weight="700" font-size="18" fill="#e8a040">S</text>
            <text x="8" y="32" font-family="Liberation Sans" font-style="italic" font-weight="700" font-size="10" fill="#303890">CATIA</text>
          </svg>
        </div>
        <div class="row row-two">
          <template v-for="(it, i) in rowTwo" :key="i">
            <span v-if="it.grip" class="grip" :style="{ marginLeft: it.gap + 'px' }"></span>
            <span
              v-else-if="it.combo"
              class="combo"
              :class="{ gray: it.gray, narrow: it.narrow, off: it.off }"
              :style="{ marginLeft: it.gap + 'px', width: it.len + 'px' }"
            >
              <span class="combo-text">{{ it.text }}</span>
              <i class="combo-arrow"></i>
            </span>
            <span v-else class="tool" :style="{ marginLeft: it.gap + 'px' }">
              <svg><use :href="'#' + it.id" /></svg>
              <i v-if="it.drop" class="drop"></i>
            </span>
          </template>
        </div>
      </div>

      <div class="status-bar">
        <span class="status-text">Select an object or a command</span>
        <span class="status-input"></span>
        <span class="status-btn"><b class="sb-a"></b></span>
        <span class="status-btn"><b class="sb-b"></b></span>
      </div>
    </div>
  </div>
</template>

<style scoped>
.window {
  width: 1439px;
  height: 859px;
  overflow: hidden;
  display: flex;
  flex-direction: column;
  font-family: "Noto Sans", sans-serif;
  background:
    radial-gradient(ellipse 36px 6px at 55px 855px, #3a3a3a, transparent),
    linear-gradient(#555 0, transparent 1px),
    radial-gradient(ellipse 52px 24px at 262px 10px, #c65248 0, #a84a44 50%, transparent 100%),
    radial-gradient(ellipse 70px 8px at 650px 29px, #a8a8a0, transparent),
    radial-gradient(ellipse 150px 40px at 80px 20px, #b0b0b0 0, #8a8a8a 55%, transparent 100%),
    linear-gradient(90deg, #555 0, #4a4a4a 300px, #0c0c0c 470px, #0a0a0a 1130px, #6a6a6a 1300px, #9c9c9c 1439px) 0 0 / 100% 29px no-repeat,
    linear-gradient(90deg, #ececec 0, #e4e4e4 7px, #c4c4c4 1432px, #b4b4b4 1439px);
}
.defs {
  position: absolute;
}
.sprite {
  display: none;
}
.title-bar {
  height: 29px;
  flex: none;
  display: flex;
  align-items: flex-start;
  box-sizing: border-box;
  padding-left: 8px;
}
.title-logo {
  width: 16px;
  height: 16px;
  margin-top: 7px;
}
.title-text {
  margin-left: 5px;
  margin-top: 6px;
  font-size: 11.75px;
  line-height: 17px;
  color: #141414;
}
.win-btns {
  margin-left: auto;
  margin-right: 7px;
  width: 103px;
  height: 20px;
  margin-top: 1px;
  display: flex;
  box-sizing: border-box;
  border: 1px solid #8c8c8c;
  border-top: none;
  border-radius: 0 0 5px 5px;
  background: rgba(255, 255, 255, .12);
}
.win-btn {
  display: flex;
  align-items: center;
  justify-content: center;
  color: #fff;
  border-right: 1px solid #888;
  box-sizing: border-box;
}
.win-btn.min { width: 29px; }
.win-btn.max { width: 27px; }
.win-btn.close {
  flex: 1;
  border-right: none;
  font-size: 13px;
  font-weight: 700;
}
.win-btn.min i {
  width: 10px;
  height: 3px;
  background: #f4f4f4;
  margin-top: 4px;
}
.win-btn.max i {
  width: 10px;
  height: 8px;
  box-sizing: border-box;
  border: 1px solid #222;
  border-top-width: 2px;
  outline: 1px solid #ddd;
}
.frame {
  flex: none;
  margin-left: 7px;
  width: 1425px;
  height: 823px;
  box-sizing: border-box;
  border: 1px solid #5c5c66;
  background: #d0d0e6;
  display: flex;
  flex-direction: column;
}
.menu-bar {
  height: 20px;
  flex: none;
  display: flex;
  align-items: center;
  font-size: 11.6px;
  color: #16161c;
}
.menu-logo {
  width: 21px;
  height: 19px;
}
.menu-item {
  height: 20px;
  line-height: 21px;
  padding-left: 7px;
  box-sizing: border-box;
  flex: none;
}
.menu-item.on {
  background: #fbe3bb;
}
.mdi-btns {
  margin-left: auto;
  margin-right: 2px;
  display: flex;
  gap: 2px;
}
.mdi {
  width: 17px;
  height: 17px;
  box-sizing: border-box;
  border: 1px solid #b4c4d8;
  background: #d6e6f4;
  display: flex;
  align-items: center;
  justify-content: center;
  color: #6c7480;
  font-size: 10px;
  font-weight: 700;
}
.mdi-min {
  width: 6px;
  height: 2px;
  background: #6c7480;
  margin-top: 6px;
}
.mdi-res {
  width: 7px;
  height: 7px;
  box-sizing: border-box;
  border: 1px solid #6c7480;
  box-shadow: 2px -2px 0 -1px #d6e6f4, 2px -2px 0 0 #6c7480;
}
.tool-bar {
  height: 37px;
  flex: none;
  display: flex;
  align-items: center;
  box-sizing: border-box;
  padding-top: 3px;
  border-bottom: 2px solid #62626c;
  background: linear-gradient(#fbfbfe 0, #eeeef8 5px, #d0d0e6 16px, #d0d0e6 27px, #a6a6b6 35px);
}
.tool {
  position: relative;
  flex: none;
  width: 24px;
  height: 24px;
  display: block;
}
.tool svg {
  width: 24px;
  height: 24px;
  display: block;
  overflow: visible;
  transform: scale(.92);
}
.drop {
  position: absolute;
  right: -4px;
  bottom: -4px;
  width: 0;
  height: 0;
  border-left: 4px solid transparent;
  border-right: 4px solid transparent;
  border-top: 4px solid #111;
}
.drop.lit {
  filter: drop-shadow(0 0 1px #fff) drop-shadow(0 0 1px #fff);
}
.grip {
  flex: none;
  width: 2px;
  height: 18px;
  background: #f4f4fa;
  box-shadow: 1px 0 0 #a4a4b4;
  border-radius: 1px;
  align-self: flex-start;
  margin-top: 0;
  display: block;
}
.grip.flat {
  width: 18px;
  height: 2px;
  align-self: center;
  box-shadow: 0 1px 0 #a4a4b4;
}
.main-row {
  flex: none;
  height: 662px;
  display: flex;
}
.viewport {
  position: relative;
  width: 1345px;
  height: 662px;
  background: #343264;
  overflow: hidden;
  flex: none;
}
.model {
  position: absolute;
  left: 0;
  top: 0;
  width: 1345px;
  height: 662px;
}
.cmp {
  font: 700 9px "Liberation Sans", sans-serif;
  fill: #f0e040;
}
.axis {
  font: 11px "Liberation Sans", sans-serif;
  fill: #fff;
}
.scroll-bar {
  position: absolute;
  left: 2px;
  top: 1px;
  bottom: 1px;
  width: 11px;
  display: flex;
  flex-direction: column;
}
.scroll-end {
  height: 10px;
  background: #5454b0;
  color: #10102c;
  font-size: 7px;
  line-height: 10px;
  text-align: center;
  flex: none;
  font-family: "DejaVu Sans", sans-serif;
}
.scroll-thumb {
  height: 59px;
  flex: none;
  background: repeating-conic-gradient(#5252ac 0 25%, #343264 0 50%) 0 0 / 2px 2px;
}
.scroll-track {
  flex: 1;
  border-top: 1px solid #9090e0;
  background: repeating-conic-gradient(#7272cc 0 25%, #5858b4 0 50%) 0 0 / 2px 2px;
}
.tree {
  position: absolute;
  left: 0;
  top: 0;
  color: #eeeef8;
  display: flex;
  flex-direction: column;
}
.elbow {
  position: absolute;
  left: 21px;
  top: 0;
  width: 14px;
  height: 241px;
  box-sizing: border-box;
  border-left: 2px solid #d8d8ea;
  border-bottom: 2px solid #d8d8ea;
  border-bottom-left-radius: 3px;
}
.tree-row {
  position: relative;
  height: 32.7px;
  display: flex;
  align-items: center;
  padding-left: 15px;
}
.node {
  position: relative;
  width: 14px;
  height: 14px;
  margin-top: -7px;
  border-radius: 50%;
  flex: none;
  background: radial-gradient(circle at 50% 50%, #e8e8e8, #6c6c6c);
}
.node::before,
.node::after {
  content: "";
  position: absolute;
  background: #0c0c0c;
}
.node::before {
  left: 2px;
  right: 2px;
  top: 6px;
  height: 2px;
}
.node::after {
  top: 2px;
  bottom: 2px;
  left: 6px;
  width: 2px;
}
.stub {
  width: 9px;
  height: 2px;
  background: #d8d8ea;
  flex: none;
  margin-top: -7px;
}
.tree-icon {
  width: 28px;
  height: 30px;
  flex: none;
  margin-top: -7px;
}
.tree-label {
  position: relative;
  margin-left: -1px;
  padding: 0 2px;
  height: 26px;
  line-height: 26px;
  font-size: 17px;
  font-weight: 300;
  white-space: nowrap;
  border: 1px solid transparent;
  border-radius: 2px;
}
.tree-label.framed {
  border-color: #5e4f74;
}
.tree-row.apps {
  padding-left: 35px;
}
.side-bar {
  position: relative;
  width: 78px;
  flex: none;
  display: flex;
  background: linear-gradient(90deg, #ffffff 0, #ecedf8 4px, #d0d0e6 12px, #d0d0e6 70px, #a8a8ba 78px);
}
.side-col {
  width: 39px;
  display: flex;
  flex-direction: column;
  align-items: center;
}
.side-col:last-of-type .drop {
  right: -5px;
}
.more {
  position: absolute;
  right: 4px;
  bottom: 2px;
  font-size: 13px;
  line-height: 13px;
  color: #f0f0f8;
}
.bottom-bars {
  height: 78px;
  flex: none;
  background: linear-gradient(#fbfbfe 0, #eaeaf6 4px, #d0d0e6 12px, #d0d0e6 68px, #a6a6b6 78px);
  border-bottom: 1px solid #5c5c66;
  box-sizing: border-box;
}
.row {
  display: flex;
  align-items: center;
}
.row-one {
  height: 40px;
}
.row-one .grip {
  margin-top: 2px;
}
.row-two {
  height: 37px;
}
.row-two .grip {
  margin-top: 4px;
}
.logo {
  margin-left: auto;
  margin-right: 5px;
  width: 44px;
  height: 36px;
}
.combo {
  position: relative;
  flex: none;
  height: 24px;
  margin-top: 2px;
  box-sizing: border-box;
  background: #fff;
  display: block;
  font-size: 12px;
  line-height: 23px;
  color: #222;
}
.combo-text {
  display: block;
  margin-left: 6px;
  width: 40px;
  overflow: hidden;
  white-space: nowrap;
}
.combo.narrow .combo-text {
  width: 18px;
}
.combo.gray {
  background: linear-gradient(#e6e6ee, #cfcfd8);
  border: 1px solid #8a8a90;
  border-radius: 3px;
  line-height: 22px;
}
.combo.gray .combo-text {
  margin-left: 3px;
}
.combo.off {
  color: #9c9ca4;
}
.combo-arrow {
  position: absolute;
  right: 3px;
  top: 11px;
  width: 0;
  height: 0;
  border-left: 4px solid transparent;
  border-right: 4px solid transparent;
  border-top: 4px solid #111;
}
.combo.off .combo-arrow {
  border-top-color: #a4a4aa;
}
.status-bar {
  flex: 1;
  display: flex;
  align-items: center;
  font-size: 11.4px;
  color: #1c1c24;
  padding-left: 3px;
}
.status-text {
  flex: none;
}
.status-input {
  margin-left: auto;
  width: 299px;
  height: 20px;
  background: #fff;
}
.status-btn {
  width: 33px;
  height: 22px;
  margin-left: 1px;
  box-sizing: border-box;
  border: 1px solid #f2f2f8;
  border-right-color: #808088;
  border-bottom-color: #808088;
  background: #c8c8d4;
  display: flex;
  align-items: center;
  justify-content: center;
}
.status-btn b {
  display: block;
  width: 12px;
  height: 10px;
  box-sizing: border-box;
  border: 1px solid #eee;
  box-shadow: 1px 1px 0 #88889a;
}
.status-btn .sb-b {
  border-radius: 50%;
}
</style>
